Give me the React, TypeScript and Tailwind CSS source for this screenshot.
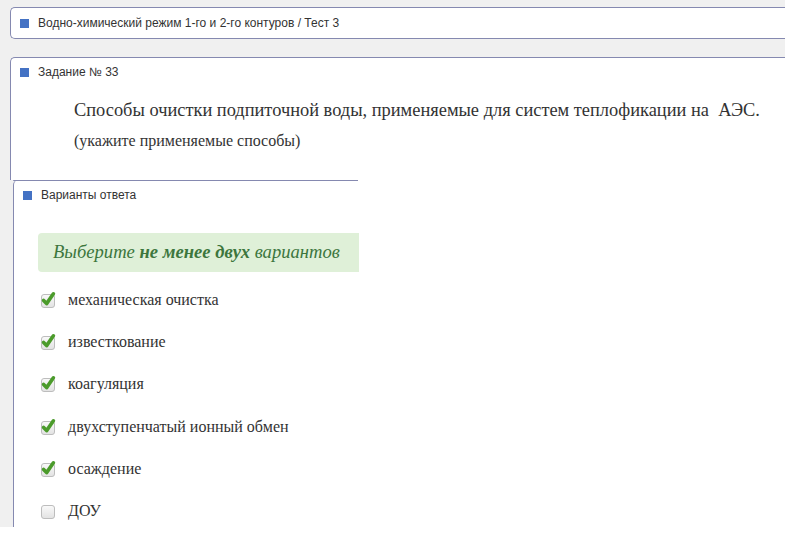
const options = [
  { label: "механическая очистка", checked: true },
  { label: "известкование", checked: true },
  { label: "коагуляция", checked: true },
  { label: "двухступенчатый ионный обмен", checked: true },
  { label: "осаждение", checked: true },
  { label: "ДОУ", checked: false },
];

function Marker() {
  return <span className="inline-block w-[9px] h-[9px] bg-[#4472c4] shrink-0" />;
}

function CheckBox({ checked }: { checked: boolean }) {
  return (
    <svg width="18" height="18" viewBox="0 0 18 18" className="shrink-0">
      <defs>
        <linearGradient id="cbg" x1="0" y1="0" x2="0" y2="1">
          <stop offset="0" stopColor="#fafafa" />
          <stop offset="1" stopColor="#e2e2e2" />
        </linearGradient>
      </defs>
      <rect x="2.5" y="3.5" width="13" height="13" rx="2.5" fill="url(#cbg)" stroke="#bdbdbd" />
      {checked && (
        <path
          d="M4.6 9.4 L7.6 12.6 L14.4 2.8"
          fill="none"
          stroke="#4b9b2b"
          strokeWidth="3.6"
          strokeLinecap="round"
          strokeLinejoin="round"
        />
      )}
    </svg>
  );
}

export default function App() {
  return (
    <div className="w-[785px] h-[556px] overflow-hidden bg-[#f0f0f0] flex flex-col text-[#333]">
      {/* путь теста */}
      <div className="ml-[10px] mt-[7px] h-[32px] bg-white border border-r-0 border-[#8589b0] rounded-l-[5px] flex items-center gap-[9px] pl-[9px] font-['Liberation_Sans',Arial,sans-serif] text-[12px]">
        <Marker />
        <span>Водно-химический режим 1-го и 2-го контуров / Тест 3</span>
      </div>

      {/* задание */}
      <div className="ml-[10px] mt-[18px] h-[123px] bg-white border-l border-t border-[#8589b0] rounded-tl-[5px]">
        <div className="flex items-center gap-[9px] pl-[9px] pt-[5px] font-['Liberation_Sans',Arial,sans-serif] text-[12px]">
          <Marker />
          <span>Задание № 33</span>
        </div>
        <div className="pl-[63px] pt-[17px] font-['Liberation_Serif','Times_New_Roman',serif]">
          <p className="text-[18.4px] leading-[24px]">
            Способы очистки подпиточной воды, применяемые для систем теплофикации на&nbsp; АЭС.
          </p>
          <p className="text-[16px] leading-[20px] mt-[9px]">(укажите применяемые способы)</p>
        </div>
      </div>

      {/* варианты ответа */}
      <div className="ml-[13px] h-[347px] bg-white border-l border-[#8589b0] rounded-tl-[5px]">
        <div className="w-[345px] border-t border-[#8589b0] rounded-tl-[5px] -ml-px" />
        <div className="flex items-center gap-[9px] pl-[9px] pt-[5px] font-['Liberation_Sans',Arial,sans-serif] text-[12px]">
          <Marker />
          <span>Варианты ответа</span>
        </div>
        <div className="ml-[24px] mt-[29px] w-[321px] h-[39px] bg-[#dff0d8] rounded-l-[4px] flex items-center pl-[15px] pb-[2px] font-['Liberation_Serif','Times_New_Roman',serif] italic text-[18.6px] text-[#3c763d]">
          Выберите&nbsp;<b>не менее двух</b>&nbsp;вариантов
        </div>
        <ul className="mt-[19px] pl-[25px] flex flex-col gap-[24.2px] font-['Liberation_Serif','Times_New_Roman',serif] text-[16px]">
          {options.map((o) => (
            <li key={o.label} className="flex items-center gap-[11px] h-[18px]">
              <CheckBox checked={o.checked} />
              <span>{o.label}</span>
            </li>
          ))}
        </ul>
      </div>

      <div className="flex-1 bg-white" />
    </div>
  );
}
